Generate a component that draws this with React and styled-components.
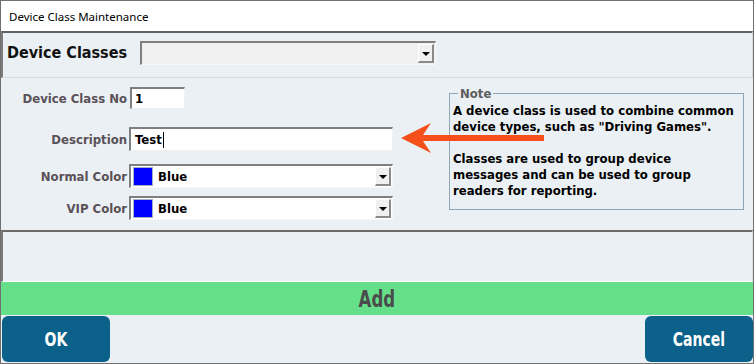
import React from "react";
import styled, { createGlobalStyle } from "styled-components";

const Global = createGlobalStyle`
  html, body { margin: 0; padding: 0; background: #ffffff; }
  * { box-sizing: border-box; }
`;

const TAHOMA = `"DejaVu Sans Condensed", "DejaVu Sans", "Liberation Sans", sans-serif`;
const NARROW = `"Liberation Sans Narrow", "DejaVu Sans Condensed", "Liberation Sans", sans-serif`;

const Window = styled.div`
  width: 754px;
  height: 364px;
  border: 1px solid #6f6f6f;
  background: #eaf0f3;
  display: flex;
  flex-direction: column;
  overflow: hidden;
`;

const TitleBar = styled.div`
  height: 30px;
  flex: none;
  background: #ffffff;
  display: flex;
  align-items: center;
  padding-left: 8px;
  font-family: "Noto Sans", "Liberation Sans", sans-serif;
  font-size: 11.5px;
  color: #000;
`;

const HeaderPanel = styled.div`
  height: 47px;
  flex: none;
  border-top: 2px solid #636363;
  border-left: 2px solid #7c7c7c;
  border-right: 1px solid #d7dcdf;
  border-bottom: 1px solid #d7dcdf;
  display: flex;
  align-items: flex-start;
  padding: 8px 0 0 4px;
  gap: 13px;
`;

const HeaderTitle = styled.div`
  font-family: ${TAHOMA};
  font-weight: bold;
  font-size: 16px;
  color: #111;
  line-height: 24px;
`;

const Combo = styled.div`
  width: ${(p) => p.$w}px;
  height: 24px;
  background: ${(p) => p.$bg};
  border-style: solid;
  border-width: 2px 1px 1px 2px;
  border-color: #7f7f7f #f7f7f7 #f7f7f7 #7f7f7f;
  display: flex;
  align-items: center;
  padding: 0 1px 0 1px;
  font-family: ${TAHOMA};
  font-weight: bold;
  font-size: 13px;
  color: #000;
`;

const ComboValue = styled.div`
  flex: 1;
  display: flex;
  align-items: center;
  gap: 5px;
  padding-left: 1px;
`;

const Swatch = styled.span`
  width: 20px;
  height: 19px;
  background: #0000ff;
  border: 1px solid #9fb2c8;
  flex: none;
`;

const DropButton = styled.div`
  width: 16px;
  height: 19px;
  background: #f0f0f0;
  border-style: solid;
  border-width: 1px 2px 2px 1px;
  border-color: #ffffff #8a8a8a #8a8a8a #ffffff;
  display: flex;
  align-items: center;
  justify-content: center;
  &::after {
    content: "";
    border-left: 4px solid transparent;
    border-right: 4px solid transparent;
    border-top: 4px solid #000;
    margin-top: 1px;
  }
`;

const Body = styled.div`
  position: relative;
  height: 152px;
  flex: none;
  display: flex;
  align-items: flex-start;
`;

const Form = styled.div`
  width: 392px;
  display: flex;
  flex-direction: column;
`;

const Row = styled.div`
  display: flex;
  align-items: center;
  margin-top: ${(p) => p.$top}px;
  gap: 2px;
`;

const Label = styled.div`
  width: 126px;
  text-align: right;
  font-family: ${TAHOMA};
  font-weight: bold;
  font-size: 13px;
  color: #5b5158;
`;

const TextBox = styled.div`
  width: ${(p) => p.$w}px;
  height: ${(p) => p.$h}px;
  margin-left: ${(p) => p.$ml || 0}px;
  background: #ffffff;
  border-style: solid;
  border-width: 2px 1px 1px 2px;
  border-color: #7f7f7f #eef1f3 #eef1f3 #7f7f7f;
  display: flex;
  align-items: center;
  padding-left: ${(p) => p.$pl}px;
  font-family: ${TAHOMA};
  font-weight: bold;
  font-size: 13px;
  color: #000;
`;

const Caret = styled.span`
  display: inline-block;
  width: 1px;
  height: 16px;
  background: #000;
  margin-left: 1px;
`;

const Note = styled.fieldset`
  margin: 8px 0 0 56px;
  width: 295px;
  height: 124px;
  border: 1px solid #8ea6b6;
  padding: 2px 4px 0 3px;
  min-width: 0;
`;

const Legend = styled.legend`
  padding: 0 2px;
  margin-left: 5px;
  font-family: ${TAHOMA};
  font-weight: bold;
  font-size: 13px;
  color: #5d5d5d;
  line-height: 15px;
`;

const NoteText = styled.p`
  margin: 0;
  font-family: ${TAHOMA};
  font-weight: bold;
  font-size: 13px;
  line-height: 16px;
  color: #000;
  white-space: nowrap;
`;

const Arrow = styled.svg`
  position: absolute;
  left: 399px;
  top: 45px;
`;

const EmptyPanel = styled.div`
  height: 52px;
  flex: none;
  border-top: 2px solid #6b6b6b;
  border-left: 2px solid #7a7a7a;
  border-right: 1px solid #dde2e5;
  border-bottom: 1px solid #ffffff;
`;

const AddBar = styled.div`
  height: 33px;
  flex: none;
  background: #65df8a;
  display: flex;
  align-items: center;
  justify-content: center;
  font-family: ${NARROW};
  font-weight: bold;
  font-size: 23px;
  color: #4b4b4b;
`;

const ButtonRow = styled.div`
  height: 47px;
  flex: none;
  display: flex;
  justify-content: space-between;
  padding: 1px 0 0 1px;
`;

const ActionButton = styled.div`
  width: 108px;
  height: 46px;
  background: #0b6189;
  border-radius: 6px;
  display: flex;
  align-items: center;
  justify-content: center;
  font-family: ${NARROW};
  font-weight: bold;
  font-size: 19px;
  color: #ffffff;
`;

const Squeeze = styled.span`
  display: inline-block;
  transform: scaleX(${(p) => p.$x});
`;

export default function App() {
  return (
    <>
      <Global />
      <Window>
        <TitleBar>Device Class Maintenance</TitleBar>
        <HeaderPanel>
          <HeaderTitle>Device Classes</HeaderTitle>
          <Combo $w={296} $bg="#f0f0f0">
            <ComboValue />
            <DropButton />
          </Combo>
        </HeaderPanel>
        <Body>
          <Form>
            <Row $top={9}>
              <Label>Device Class No</Label>
              <TextBox $w={55} $h={22} $pl={3} $ml={1}>1</TextBox>
            </Row>
            <Row $top={18}>
              <Label>Description</Label>
              <TextBox $w={264} $h={24} $pl={4}>
                Test<Caret />
              </TextBox>
            </Row>
            <Row $top={13}>
              <Label>Normal Color</Label>
              <Combo $w={264} $bg="#ffffff">
                <ComboValue>
                  <Swatch />
                  Blue
                </ComboValue>
                <DropButton />
              </Combo>
            </Row>
            <Row $top={8}>
              <Label>VIP Color</Label>
              <Combo $w={264} $bg="#ffffff">
                <ComboValue>
                  <Swatch />
                  Blue
                </ComboValue>
                <DropButton />
              </Combo>
            </Row>
          </Form>
          <Note>
            <Legend>Note</Legend>
            <NoteText>A device class is used to combine common</NoteText>
            <NoteText>device types, such as "Driving Games".</NoteText>
            <NoteText>&nbsp;</NoteText>
            <NoteText>Classes are used to group device</NoteText>
            <NoteText>messages and can be used to group</NoteText>
            <NoteText>readers for reporting.</NoteText>
          </Note>
          <Arrow width="145" height="31" viewBox="0 0 145 31">
            <polygon
              points="1,15 31,0 23,12 144,12 144,18 23,18 31,30"
              fill="#f5501c"
            />
          </Arrow>
        </Body>
        <EmptyPanel />
        <AddBar>
          <Squeeze $x={0.8}>Add</Squeeze>
        </AddBar>
        <ButtonRow>
          <ActionButton>
            <Squeeze $x={0.82}>OK</Squeeze>
          </ActionButton>
          <ActionButton>
            <Squeeze $x={0.82}>Cancel</Squeeze>
          </ActionButton>
        </ButtonRow>
      </Window>
    </>
  );
}
